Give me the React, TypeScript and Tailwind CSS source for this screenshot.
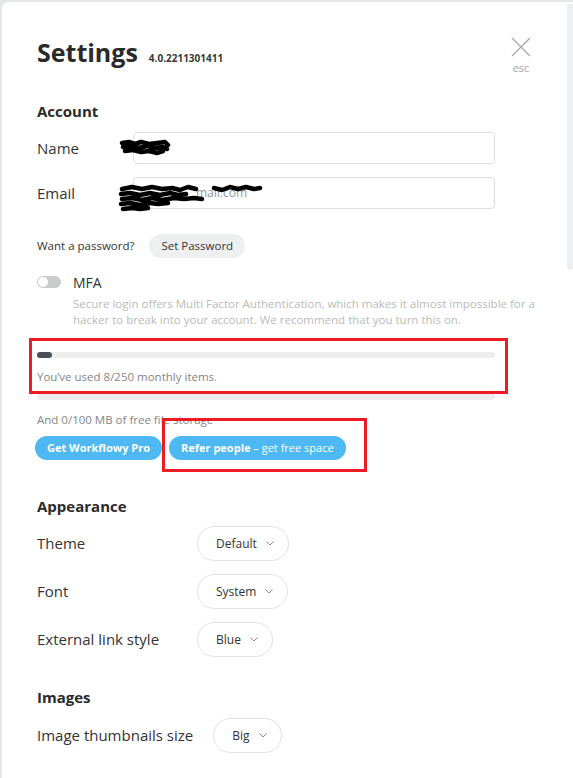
import React from 'react'

const font = { fontFamily: '"Open Sans", "Noto Sans", sans-serif' }

function Chevron() {
  return (
    <svg width="8" height="5" viewBox="0 0 8 5" className="ml-[9px]">
      <polyline points="0.5,0.5 4,4 7.5,0.5" fill="none" stroke="#8a8a8a" strokeWidth="1" />
    </svg>
  )
}

function Dropdown({ value }: { value: string }) {
  return (
    <div className="inline-flex h-[35px] items-center rounded-full border border-[#e1e1e1] pl-[18px] pr-[14px] text-[12px] text-[#333]">
      <span>{value}</span>
      <Chevron />
    </div>
  )
}

function Bar({ fill }: { fill?: number }) {
  return (
    <div className="h-[6px] w-[458px] rounded-full bg-[#ededef]">
      {fill ? <div className="h-full rounded-full bg-[#4b5055]" style={{ width: fill }} /> : null}
    </div>
  )
}

export default function App() {
  return (
    <div className="h-[778px] w-[573px] overflow-hidden bg-[#e4e6e9] pl-[2px] pt-[2px]" style={font}>
      <div className="relative flex h-full rounded-tl-[6px] bg-white">
        {/* content */}
        <div className="w-[529px] pl-[35px] pt-[34px]">
          {/* header */}
          <div className="flex items-start justify-between">
            <div className="flex items-baseline">
              <h1 className="text-[25px] font-bold leading-[32px] text-[#2a2a2a]">Settings</h1>
              <span className="ml-[11px] text-[10px] font-bold text-[#3a3a3a]">4.0.2211301411</span>
            </div>
            <div className="flex flex-col items-center pt-[1px]">
              <svg width="20" height="20" viewBox="0 0 20 20">
                <line x1="1" y1="1" x2="19" y2="19" stroke="#a8a8a8" strokeWidth="1.2" />
                <line x1="19" y1="1" x2="1" y2="19" stroke="#a8a8a8" strokeWidth="1.2" />
              </svg>
              <span className="mt-[4px] text-[11px] leading-[14px] text-[#a8a8a8]">esc</span>
            </div>
          </div>

          {/* account */}
          <h2 className="mt-[26px] text-[15px] font-bold leading-[20px] text-[#2a2a2a]">Account</h2>

          <div className="mt-[11px] flex h-[32px] items-center">
            <span className="w-[96px] text-[15px] text-[#333]">Name</span>
            <div className="relative h-[32px] w-[362px] rounded-[4px] border border-[#dcdee2]">
              <svg className="absolute left-[-15px] top-[6px]" width="52" height="18" viewBox="0 0 52 18">
                <path
                  d="M3 4 L10 3 L16 5 L22 3 L30 5 L38 4 L46 3 L49 6 M4 8 L12 7 L20 9 L28 7 L36 9 L44 8 L48 10 M6 12 L14 11 L22 13 L30 12 L38 14 L44 12"
                  fill="none"
                  stroke="#000"
                  strokeWidth="4.5"
                  strokeLinecap="round"
                  strokeLinejoin="round"
                />
              </svg>
            </div>
          </div>

          <div className="mt-[13px] flex h-[32px] items-center">
            <span className="w-[96px] text-[15px] text-[#333]">Email</span>
            <div className="relative h-[32px] w-[362px] rounded-[4px] border border-[#dcdee2]">
              <span className="absolute left-[62px] top-[6px] text-[12px] text-[#8c98a8]">mail.com</span>
              <svg className="absolute left-[-16px] top-[6px]" width="148" height="30" viewBox="0 0 148 30">
                <path
                  d="M4 5 L14 3 L24 5 L34 3 L44 5 L54 4 L62 6 L70 3 L78 5 M96 4 L104 6 L112 3 L120 5 L128 3 L136 5 L142 4 M3 10 L12 9 L22 11 L32 9 L42 11 L52 9 L60 11 L68 10 M4 15 L14 14 L24 16 L34 14 L44 16 L56 14 L66 15 L76 14 L84 15 M3 20 L12 19 L22 21 L32 19 L40 20 L50 19 M5 25 L14 24 L22 25 L30 24"
                  fill="none"
                  stroke="#000"
                  strokeWidth="4.5"
                  strokeLinecap="round"
                  strokeLinejoin="round"
                />
              </svg>
            </div>
          </div>

          <div className="mt-[25px] flex h-[24px] items-center">
            <span className="text-[11.5px] text-[#333]">Want a password?</span>
            <button className="ml-[15px] h-[24px] rounded-full bg-[#eeeff1] px-[12px] text-[11.5px] text-[#333]">
              Set Password
            </button>
          </div>

          {/* MFA */}
          <div className="mt-[14px] flex h-[20px] items-center">
            <div className="flex h-[12px] w-[24px] items-center rounded-full bg-[#c9cbcd] pl-[1px]">
              <div className="h-[10px] w-[10px] rounded-full bg-white" />
            </div>
            <span className="ml-[12px] text-[14px] text-[#333]">MFA</span>
          </div>
          <p className="ml-[36px] mt-[4px] w-[462px] text-[11.5px] leading-[16px] text-[#bababa]">
            Secure login offers Multi Factor Authentication, which makes it almost impossible for a hacker to break into
            your account. We recommend that you turn this on.
          </p>

          {/* usage */}
          <div className="mt-[24px]">
            <Bar fill={15} />
          </div>
          <p className="mt-[11px] text-[11.5px] leading-[16px] text-[#858585]">You’ve used 8/250 monthly items.</p>
          <div className="mt-[9px]">
            <Bar />
          </div>
          <p className="mt-[12px] text-[11.5px] leading-[16px] text-[#858585]">And 0/100 MB of free file storage</p>
          <div className="-ml-[2px] mt-[8px] flex gap-[7px]">
            <button className="h-[24px] rounded-full bg-[#4db8f1] px-[12px] text-[11px] font-bold text-white">
              Get Workflowy Pro
            </button>
            <button className="h-[24px] rounded-full bg-[#4db8f1] px-[12px] text-[11px] text-white">
              <span className="font-bold">Refer people</span> – get free space
            </button>
          </div>

          {/* appearance */}
          <h2 className="mt-[36px] text-[15px] font-bold leading-[20px] text-[#2a2a2a]">Appearance</h2>
          <div className="mt-[10px] flex flex-col gap-[13px]">
            <div className="flex items-center">
              <span className="w-[160px] text-[15px] text-[#333]">Theme</span>
              <Dropdown value="Default" />
            </div>
            <div className="flex items-center">
              <span className="w-[160px] text-[15px] text-[#333]">Font</span>
              <Dropdown value="System" />
            </div>
            <div className="flex items-center">
              <span className="w-[160px] text-[15px] text-[#333]">External link style</span>
              <Dropdown value="Blue" />
            </div>
          </div>

          {/* images */}
          <h2 className="mt-[30px] text-[15px] font-bold leading-[20px] text-[#2a2a2a]">Images</h2>
          <div className="mt-[11px] flex items-center">
            <span className="text-[15px] text-[#333]">Image thumbnails size</span>
            <div className="ml-[20px]">
              <Dropdown value="Big" />
            </div>
          </div>
        </div>

        {/* scrollbar */}
        <div className="ml-auto w-[6px] pt-[2px]">
          <div className="h-[266px] rounded-b-[4px] bg-[#eeeff1]" />
        </div>

        {/* annotation boxes */}
        <div className="absolute left-[27px] top-[336px] h-[56px] w-[479px] border-[3px] border-[#ed1c24]" />
        <div className="absolute left-[160px] top-[416px] h-[54px] w-[205px] border-[3px] border-[#ed1c24]" />
      </div>
    </div>
  )
}
